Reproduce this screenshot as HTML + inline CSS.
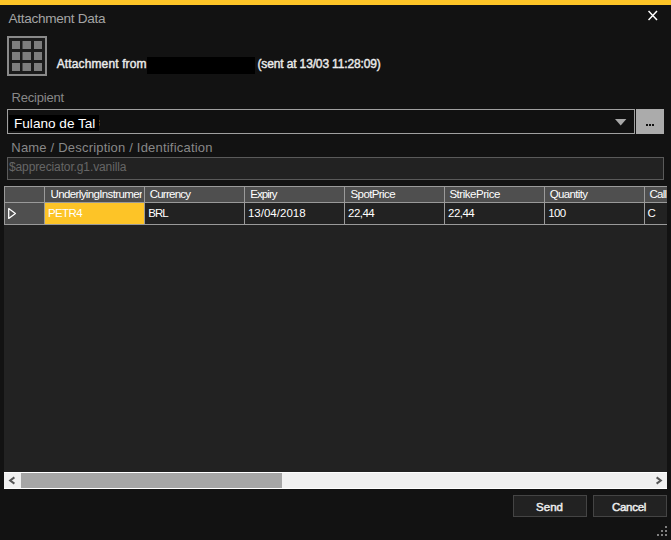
<!DOCTYPE html>
<html><head><meta charset="utf-8"><title>Attachment Data</title>
<style>
html,body{margin:0;padding:0;}
body{width:671px;height:540px;background:#121212;overflow:hidden;position:relative;font-family:"Liberation Sans",sans-serif;}
.a{position:absolute;white-space:nowrap;line-height:1;}
.bar{left:0;top:0;width:671px;height:5px;background:#fdc427;}
.title{left:8.5px;top:12px;font-size:13.6px;color:#a4a4a4;letter-spacing:-0.3px;}
.hdr{font-size:12px;font-weight:normal;color:#ececec;-webkit-text-stroke:0.4px #ececec;}
.lbl{font-size:13px;color:#888;}
.combo{left:7px;top:109px;width:626px;height:23px;border:1px solid #a0a0a0;background:#111;}
.sel{left:9px;top:115px;width:90px;height:16px;background:#000;}
.seltx{left:14px;top:117px;font-size:13.6px;color:#fff;letter-spacing:0px;}
.dots{left:636px;top:109px;width:28px;height:25px;background:#ababab;}
.tb{left:7px;top:157px;width:655px;height:21px;border:1px solid #5a5a5a;background:#222;}
.tbtx{left:9px;top:161px;font-size:12px;color:#666;letter-spacing:-0.12px;}
.grid{left:4px;top:186px;width:663px;height:286px;background:#222;overflow:hidden;}
.hc{position:absolute;top:0;height:15px;background:#4f4f4f;border:solid #9a9a9a;border-width:1px 1px 1px 0;font-size:11.5px;color:#fff;line-height:15px;white-space:nowrap;overflow:hidden;}
.dc{position:absolute;top:17px;height:21px;background:#222;border:solid #9a9a9a;border-width:0 1px 1px 0;font-size:11.5px;color:#fff;line-height:21px;white-space:nowrap;overflow:hidden;}
.sb{left:4px;top:472px;width:663px;height:15px;background:#f0f0f0;border:solid #fff;border-width:1px 0 1px 0;}
.thumb{left:21px;top:473px;width:261px;height:15px;background:#a6a6a6;}
.btn{top:495px;width:72px;height:19px;padding-top:1px;border:1px solid #444;background:#222;color:#eee;font-size:11.5px;font-weight:normal;-webkit-text-stroke:0.45px #eee;text-align:center;line-height:21px;letter-spacing:0px;}
</style></head><body>
<div class="a bar"></div>
<div class="a title" id="title">Attachment Data</div>
<svg class="a" style="left:648px;top:10px" width="10" height="11" viewBox="0 0 10 11"><path d="M0.5 1 L9 10 M9 1 L0.5 10" stroke="#fff" stroke-width="1.5" fill="none"/></svg>
<svg class="a" style="left:7px;top:36px" width="40" height="40" viewBox="0 0 40 40"><rect x="1" y="1" width="38" height="38" fill="#1b1b1b" stroke="#8a8a8a" stroke-width="2"/>
<g fill="#7d7d7d"><rect x="5" y="5" width="8" height="8"/><rect x="15.5" y="5" width="8.5" height="8"/><rect x="27" y="5" width="8" height="8"/>
<rect x="5" y="16" width="8" height="8"/><rect x="15.5" y="16" width="8.5" height="8"/><rect x="27" y="16" width="8" height="8"/>
<rect x="5" y="27" width="8" height="8"/><rect x="15.5" y="27" width="8.5" height="8"/><rect x="27" y="27" width="8" height="8"/></g></svg>
<div class="a hdr" id="h1" style="left:56.7px;top:58px;letter-spacing:0.13px">Attachment from</div>
<div class="a" style="left:147px;top:57px;width:108px;height:17px;background:#000"></div>
<div class="a hdr" id="h2" style="left:257.5px;top:58px;letter-spacing:-0.14px">(sent at 13/03 11:28:09)</div>
<div class="a lbl" id="l1" style="left:11.5px;top:91px;letter-spacing:-0.2px">Recipient</div>
<div class="a combo"></div>
<div class="a sel"></div>
<div class="a seltx" id="sel">Fulano de Tal</div>
<div class="a" style="left:99px;top:120px;width:1px;height:2px;background:#5a3d12;box-shadow:0 3px 0 #5a3d12,0 4px 0 #4a2a0e"></div>
<svg class="a" style="left:614px;top:118px" width="13" height="8" viewBox="0 0 13 8"><path d="M1 1 H12.4 L6.7 7.4 Z" fill="#a8a8a8"/></svg>
<div class="a dots"></div>
<div class="a" style="left:645.5px;top:124px;width:2px;height:2px;background:#111;box-shadow:3px 0 0 #111,6px 0 0 #111"></div>
<div class="a lbl" id="l2" style="left:11.3px;top:141px;letter-spacing:0.2px">Name / Description / Identification</div>
<div class="a tb"></div>
<div class="a tbtx" id="tbtx">$appreciator.g1.vanilla</div>
<div class="a grid">
 <div class="hc" style="left:0;width:39px;border-left-width:1px"></div>
 <div class="hc" style="left:41px;width:99px"><span class="m" style="margin-left:5.5px;letter-spacing:-0.62px;display:inline-block;width:91.8px;overflow:hidden;vertical-align:top">UnderlyingInstrument</span></div>
 <div class="hc" style="left:141px;width:99px"><span class="m" style="margin-left:4.68px;letter-spacing:-0.75px">Currency</span></div>
 <div class="hc" style="left:241px;width:99px"><span class="m" style="margin-left:5.20px;letter-spacing:-0.91px">Expiry</span></div>
 <div class="hc" style="left:341px;width:99px"><span class="m" style="margin-left:5.52px;letter-spacing:-0.60px">SpotPrice</span></div>
 <div class="hc" style="left:441px;width:99px"><span class="m" style="margin-left:4.40px;letter-spacing:-0.46px">StrikePrice</span></div>
 <div class="hc" style="left:541px;width:99px"><span class="m" style="margin-left:4.84px;letter-spacing:-0.67px">Quantity</span></div>
 <div class="hc" style="left:641px;width:99px"><span class="m" style="margin-left:4.5px;letter-spacing:-0.75px">Call</span></div>
 <div class="dc" style="left:0;width:39px;border-left-width:1px;background:#4f4f4f"><svg style="position:absolute;left:3px;top:4px" width="9" height="13" viewBox="0 0 9 13"><path d="M0.7 1.6 L7.4 6.5 L0.7 11.4 Z" fill="none" stroke="#fff" stroke-width="1.3" stroke-linejoin="round"/></svg></div>
 <div class="dc" style="left:41px;width:99px;background:#fdc427"><span class="m" style="margin-left:3.00px;letter-spacing:-0.63px">PETR4</span></div>
 <div class="dc" style="left:141px;width:99px"><span class="m" style="margin-left:3.20px;letter-spacing:-0.90px">BRL</span></div>
 <div class="dc" style="left:241px;width:99px"><span class="m" style="margin-left:2.88px;letter-spacing:0.02px">13/04/2018</span></div>
 <div class="dc" style="left:341px;width:99px"><span class="m" style="margin-left:3.04px;letter-spacing:-0.52px">22,44</span></div>
 <div class="dc" style="left:441px;width:99px"><span class="m" style="margin-left:3.04px;letter-spacing:-0.52px">22,44</span></div>
 <div class="dc" style="left:541px;width:99px"><span class="m" style="margin-left:3.20px;letter-spacing:-0.62px">100</span></div>
 <div class="dc" style="left:641px;width:99px"><span class="m" style="margin-left:2.56px;letter-spacing:0.00px">C</span></div>
</div>
<div class="a sb"></div>
<div class="a thumb"></div>
<svg class="a" style="left:8px;top:476px" width="8" height="9" viewBox="0 0 8 9"><path d="M6.4 1.4 L2.2 4.5 L6.4 7.6" fill="none" stroke="#555" stroke-width="2"/></svg>
<svg class="a" style="left:655px;top:476px" width="8" height="9" viewBox="0 0 8 9"><path d="M1.6 1.4 L5.8 4.5 L1.6 7.6" fill="none" stroke="#555" stroke-width="2"/></svg>
<div class="a btn" id="send" style="left:513px;text-indent:-1px">Send</div>
<div class="a btn" id="cancel" style="left:593px;letter-spacing:-0.3px;text-indent:-2px">Cancel</div>
<svg class="a" style="left:657px;top:526px" width="10" height="10" viewBox="0 0 10 10"><g fill="#808080"><rect x="8" y="0" width="2" height="2"/><rect x="4" y="4" width="2" height="2"/><rect x="8" y="4" width="2" height="2"/><rect x="0" y="8" width="2" height="2"/><rect x="4" y="8" width="2" height="2"/><rect x="8" y="8" width="2" height="2"/></g></svg>
</body></html>
